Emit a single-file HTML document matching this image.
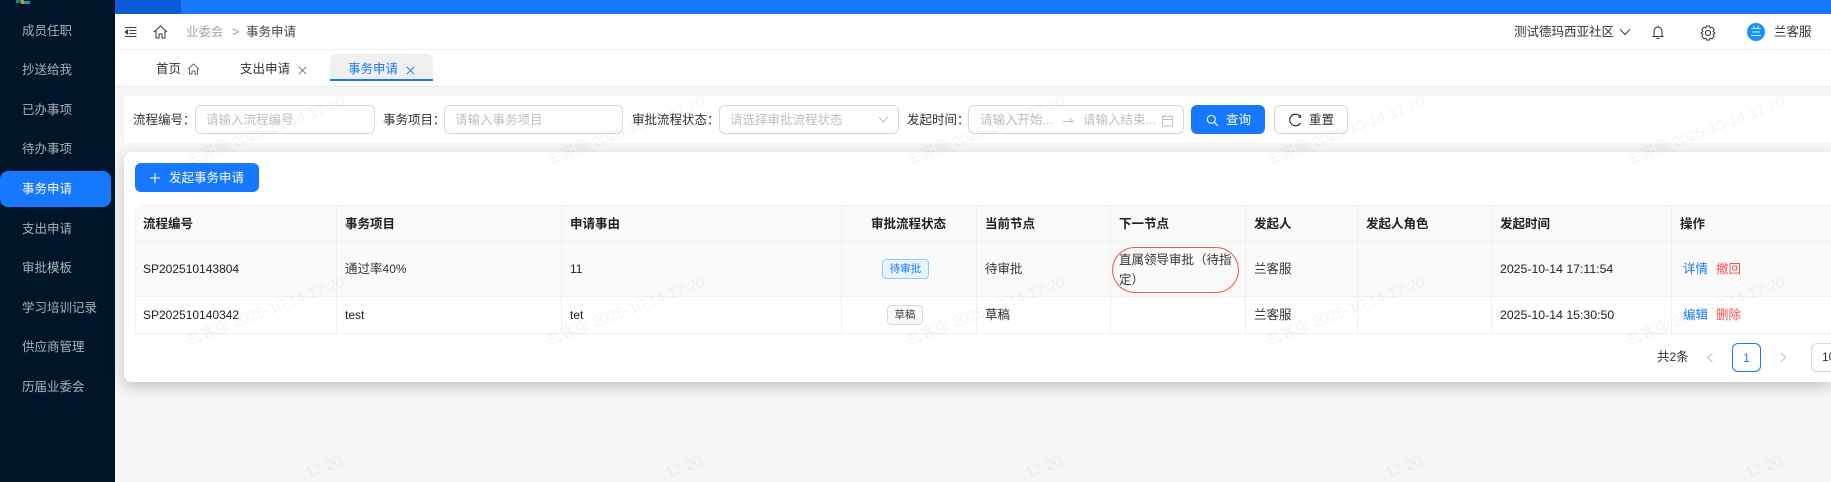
<!DOCTYPE html>
<html lang="zh-CN"><head><meta charset="utf-8"><title>事务申请</title>
<style>
*{box-sizing:border-box}
html,body{margin:0;padding:0;width:1831px;height:482px;overflow:hidden}
#r{position:absolute;left:0;top:0;width:1831px;height:482px;overflow:hidden;background:#f5f5f5;font-family:"Liberation Sans","Noto Sans CJK SC",sans-serif;font-size:12.5px;color:#222}
.a{position:absolute}
.t{position:absolute;white-space:nowrap;line-height:20px;height:20px}
.n{font-size:12px}
.d{font-size:12.3px}
.s{color:rgba(255,255,255,.65)}
.h{font-weight:700;color:#222}
.ph{color:#bfbfbf}
.ln{position:absolute;background:#f0f0f0}
.box{position:absolute;border:1px solid #d9d9d9;border-radius:6px;background:#fff;top:105px;height:29px}
svg{position:absolute;display:block;fill:none}
#wm{left:0;top:0;overflow:hidden;pointer-events:none}
#wm text{font-family:"Liberation Sans","Noto Sans CJK SC",sans-serif;font-size:15px;fill:#000;fill-opacity:.05}
</style></head><body><div id="r">

<!-- top bar -->
<div class="a" style="left:115px;top:0;width:1716px;height:14px;background:#1677ff"></div>
<div class="a" style="left:115px;top:0;width:66px;height:14px;background:#0b5bd6"></div>

<!-- sidebar -->
<div class="a" style="left:0;top:0;width:115px;height:482px;background:#001529"></div>
<div class="a" style="left:16px;top:0;width:5px;height:3px;background:#157f86"></div>
<div class="a" style="left:21px;top:0;width:3px;height:4px;background:#c98d2c"></div>
<div class="a" style="left:24px;top:1px;width:6px;height:3px;background:#1f95a3"></div>
<div class="a" style="left:0;top:171px;width:111px;height:36px;border-radius:8px;background:#1677ff"></div>
<span class="t s" style="left:22px;top:21px">成员任职</span>
<span class="t s" style="left:22px;top:60px">抄送给我</span>
<span class="t s" style="left:22px;top:100px">已办事项</span>
<span class="t s" style="left:22px;top:139px">待办事项</span>
<span class="t" style="left:22px;top:179px;color:#fff">事务申请</span>
<span class="t s" style="left:22px;top:219px">支出申请</span>
<span class="t s" style="left:22px;top:258px">审批模板</span>
<span class="t s" style="left:22px;top:298px">学习培训记录</span>
<span class="t s" style="left:22px;top:337px">供应商管理</span>
<span class="t s" style="left:22px;top:377px">历届业委会</span>

<!-- header -->
<div class="a" style="left:115px;top:14px;width:1716px;height:36px;background:#fff;border-bottom:1px solid #f0f0f0"></div>
<svg style="left:124px;top:26px" width="13" height="12" viewBox="0 0 13 12" stroke="#444" stroke-width="1"><path d="M1 1.5H12.5M5 4.5H12.5M5 7.5H12.5M1 10.5H12.5"/><path d="M3.5 4L1 6L3.5 8Z" fill="#444"/></svg>
<svg style="left:153px;top:25px" width="15" height="14" viewBox="0 0 15 14" stroke="#333" stroke-width="1"><path d="M1 7L7.5 1L14 7M3 6V13H6V9H9V13H12V6"/></svg>
<span class="t" style="left:186px;top:22px;color:#a6a6a6">业委会</span>
<span class="t" style="left:232px;top:22px;color:#999">&gt;</span>
<span class="t" style="left:246px;top:22px;color:#444">事务申请</span>
<span class="t" style="left:1514px;top:22px;color:#333">测试德玛西亚社区</span>
<svg style="left:1619px;top:28px" width="12" height="8" viewBox="0 0 12 8" stroke="#333" stroke-width="1"><path d="M1 1.2L6 6.6L11 1.2"/></svg>
<svg style="left:1651px;top:25px" width="14" height="15" viewBox="0 0 14 15" stroke="#333" stroke-width="1"><path d="M1.5 11.5H12.5M3 11.5V6.5C3 3.8 4.8 2 7 2C9.2 2 11 3.8 11 6.5V11.5M7 .5V2M5.5 13.5H8.5"/></svg>
<svg style="left:1700px;top:25px" width="16" height="16" viewBox="0 0 16 16" stroke="#333" stroke-width="1"><path d="M6.4 1H9.6L10.1 3L12 2.2L14.2 4.9L13 6.5L15 8L13 9.5L14.2 11.1L12 13.8L10.1 13L9.6 15H6.4L5.9 13L4 13.8L1.8 11.1L3 9.5L1 8L3 6.5L1.8 4.9L4 2.2L5.9 3Z"/><circle cx="8" cy="8" r="2.6"/></svg>
<div class="a" style="left:1747px;top:23px;width:18px;height:18px;border-radius:50%;background:#1890ff;color:#fff;font-size:11px;line-height:18px;text-align:center">兰</div>
<span class="t" style="left:1774px;top:22px;color:#333">兰客服</span>

<!-- tabs -->
<div class="a" style="left:115px;top:50px;width:1716px;height:37px;background:#fff;border-bottom:1px solid #ececec"></div>
<div class="a" style="left:330px;top:54px;width:103px;height:27px;background:#f0f0f0;border-radius:6px 6px 0 0;border-bottom:2px solid #1677ff"></div>
<span class="t" style="left:156px;top:59px;color:#333">首页</span>
<svg style="left:187px;top:63px" width="13" height="12" viewBox="0 0 13 12" stroke="#666" stroke-width="1"><path d="M1 6L6.5 1L12 6M2.5 5.5V11H5V8H8V11H10.5V5.5"/></svg>
<span class="t" style="left:240px;top:59px;color:#333">支出申请</span>
<svg style="left:298px;top:66px" width="9" height="9" viewBox="0 0 9 9" stroke="#777" stroke-width="1"><path d="M.8 .8L8.2 8.2M8.2 .8L.8 8.2"/></svg>
<span class="t" style="left:348px;top:59px;color:#1677ff">事务申请</span>
<svg style="left:406px;top:66px" width="9" height="9" viewBox="0 0 9 9" stroke="#1677ff" stroke-width="1"><path d="M.8 .8L8.2 8.2M8.2 .8L.8 8.2"/></svg>

<!-- filter -->
<div class="a" style="left:124px;top:96px;width:1707px;height:47px;background:#fff"></div>
<span class="t" style="left:133px;top:110px;color:#333">流程编号：</span>
<div class="box" style="left:195px;width:180px"></div>
<span class="t ph" style="left:206px;top:110px">请输入流程编号</span>
<span class="t" style="left:383px;top:110px;color:#333">事务项目：</span>
<div class="box" style="left:444px;width:179px"></div>
<span class="t ph" style="left:455px;top:110px">请输入事务项目</span>
<span class="t" style="left:632px;top:110px;color:#333">审批流程状态：</span>
<div class="box" style="left:719px;width:180px"></div>
<span class="t ph" style="left:730px;top:110px">请选择审批流程状态</span>
<svg style="left:878px;top:116px" width="11" height="7" viewBox="0 0 11 7" stroke="#bfbfbf" stroke-width="1"><path d="M1 1L5.5 6L10 1"/></svg>
<span class="t" style="left:907px;top:110px;color:#333">发起时间：</span>
<div class="box" style="left:968px;width:216px"></div>
<span class="t ph" style="left:980px;top:110px">请输入开始...</span>
<svg style="left:1062px;top:117px" width="12" height="6" viewBox="0 0 12 6" stroke="#bfbfbf" stroke-width="1"><path d="M1 4.5H11L8 1.5"/></svg>
<span class="t ph" style="left:1083px;top:110px">请输入结束...</span>
<svg style="left:1161px;top:114px" width="13" height="13" viewBox="0 0 13 13" stroke="#bfbfbf" stroke-width="1"><path d="M1.5 2.5H11.5V12H1.5ZM1.5 5.5H11.5M4 .8V3M9 .8V3"/></svg>
<div class="a" style="left:1191px;top:105px;width:74px;height:29px;border-radius:6px;background:#1677ff"></div>
<svg style="left:1206px;top:114px" width="13" height="13" viewBox="0 0 13 13" stroke="#fff" stroke-width="1.1"><circle cx="5.3" cy="5.3" r="4"/><path d="M8.2 8.2L12 12"/></svg>
<span class="t" style="left:1226px;top:110px;color:#fff">查询</span>
<div class="box" style="left:1274px;width:74px"></div>
<svg style="left:1288px;top:113px" width="14" height="14" viewBox="0 0 14 14" stroke="#222" stroke-width="1.1"><path d="M12.4 3.8A5.8 5.8 0 1 0 12.6 9.8"/><path d="M12.6 2V4.4H10.4" stroke-width=".9"/></svg>
<span class="t" style="left:1309px;top:110px;color:#333">重置</span>

<!-- card -->
<div class="a" style="left:124px;top:152px;width:1707px;height:230px;background:#fff;border-radius:8px 0 0 8px;box-shadow:0 5px 14px rgba(0,0,0,.2)"></div>
<div class="a" style="left:135px;top:163px;width:124px;height:29px;border-radius:6px;background:#1677ff"></div>
<svg style="left:149px;top:172px" width="12" height="12" viewBox="0 0 12 12" stroke="#fff" stroke-width="1.1"><path d="M6 1V11M1 6H11"/></svg>
<span class="t" style="left:169px;top:168px;color:#fff">发起事务申请</span>

<!-- table -->
<div class="a" style="left:135px;top:205px;width:1696px;height:92px;background:#fafafa;border-radius:6px 0 0 0"></div>
<div class="ln" style="left:141px;top:205px;width:1690px;height:1px"></div>
<div class="ln" style="left:135px;top:241px;width:1696px;height:1px"></div>
<div class="ln" style="left:135px;top:296px;width:1696px;height:1px"></div>
<div class="ln" style="left:135px;top:333px;width:1696px;height:1px"></div>
<div class="ln" style="left:135px;top:209px;width:1px;height:125px"></div>
<div class="ln" style="left:336px;top:205px;width:1px;height:129px"></div>
<div class="ln" style="left:561px;top:205px;width:1px;height:129px"></div>
<div class="ln" style="left:841px;top:205px;width:1px;height:129px"></div>
<div class="ln" style="left:976px;top:205px;width:1px;height:129px"></div>
<div class="ln" style="left:1110px;top:205px;width:1px;height:129px"></div>
<div class="ln" style="left:1245px;top:205px;width:1px;height:129px"></div>
<div class="ln" style="left:1357px;top:205px;width:1px;height:129px"></div>
<div class="ln" style="left:1491px;top:205px;width:1px;height:129px"></div>
<div class="ln" style="left:1671px;top:205px;width:1px;height:129px"></div>

<span class="t h" style="left:143px;top:214px">流程编号</span>
<span class="t h" style="left:345px;top:214px">事务项目</span>
<span class="t h" style="left:570px;top:214px">申请事由</span>
<span class="t h" style="left:871px;top:214px">审批流程状态</span>
<span class="t h" style="left:985px;top:214px">当前节点</span>
<span class="t h" style="left:1119px;top:214px">下一节点</span>
<span class="t h" style="left:1254px;top:214px">发起人</span>
<span class="t h" style="left:1366px;top:214px">发起人角色</span>
<span class="t h" style="left:1500px;top:214px">发起时间</span>
<span class="t h" style="left:1680px;top:214px">操作</span>

<span class="t n" style="left:143px;top:259px">SP202510143804</span>
<span class="t" style="left:345px;top:259px;color:#333">通过率<span class="n">40%</span></span>
<span class="t n" style="left:570px;top:259px">11</span>
<div class="a" style="left:882px;top:259px;width:47px;height:20px;border:1px solid #91caff;border-radius:4px;background:#e6f4ff;color:#1677ff;font-size:10.5px;line-height:18px;text-align:center">待审批</div>
<span class="t" style="left:985px;top:259px;color:#333">待审批</span>
<span class="t" style="left:1119px;top:250px;color:#333">直属领导审批（待指</span>
<span class="t" style="left:1119px;top:270px;color:#333">定）</span>
<div class="a" style="left:1112px;top:247px;width:127px;height:46px;border:1px solid #f4565a;border-radius:23px"></div>
<span class="t" style="left:1254px;top:259px;color:#333">兰客服</span>
<span class="t d" style="left:1500px;top:259px">2025-10-14 17:11:54</span>
<span class="t" style="left:1683px;top:259px;color:#1677ff">详情</span>
<span class="t" style="left:1716px;top:259px;color:#ff4d4f">撤回</span>

<span class="t n" style="left:143px;top:305px">SP202510140342</span>
<span class="t n" style="left:345px;top:305px">test</span>
<span class="t n" style="left:570px;top:305px">tet</span>
<div class="a" style="left:887px;top:305px;width:36px;height:20px;border:1px solid #d9d9d9;border-radius:4px;background:#fafafa;color:#444;font-size:10.5px;line-height:18px;text-align:center">草稿</div>
<span class="t" style="left:985px;top:305px;color:#333">草稿</span>
<span class="t" style="left:1254px;top:305px;color:#333">兰客服</span>
<span class="t d" style="left:1500px;top:305px">2025-10-14 15:30:50</span>
<span class="t" style="left:1683px;top:305px;color:#1677ff">编辑</span>
<span class="t" style="left:1716px;top:305px;color:#ff4d4f">删除</span>

<!-- pagination -->
<span class="t" style="left:1657px;top:347px;color:#333">共<span class="n">2</span>条</span>
<svg style="left:1706px;top:352px" width="8" height="11" viewBox="0 0 8 11" stroke="#bfbfbf" stroke-width="1.1"><path d="M6.5 1L1.5 5.5L6.5 10"/></svg>
<div class="a" style="left:1732px;top:343px;width:29px;height:29px;border:1px solid #1677ff;border-radius:6px;color:#1677ff;font-size:12px;line-height:28px;text-align:center;background:#fff">1</div>
<svg style="left:1779px;top:352px" width="8" height="11" viewBox="0 0 8 11" stroke="#bfbfbf" stroke-width="1.1"><path d="M1.5 1L6.5 5.5L1.5 10"/></svg>
<div class="a" style="left:1811px;top:343px;width:20px;height:29px;border:1px solid #d9d9d9;border-right:0;border-radius:6px 0 0 6px;background:#fff"></div>
<span class="t n" style="left:1822px;top:347px;color:#333;width:9px;overflow:hidden">10</span>

<!-- watermarks -->
<svg id="wm" width="1831" height="482" viewBox="0 0 1831 482">
<text x="187" y="165" transform="rotate(-20.5 187 160)">兰客服 2025-10-14 17:20</text>
<text x="547" y="165" transform="rotate(-20.5 547 160)">兰客服 2025-10-14 17:20</text>
<text x="907" y="165" transform="rotate(-20.5 907 160)">兰客服 2025-10-14 17:20</text>
<text x="1267" y="165" transform="rotate(-20.5 1267 160)">兰客服 2025-10-14 17:20</text>
<text x="1627" y="165" transform="rotate(-20.5 1627 160)">兰客服 2025-10-14 17:20</text>
<text x="187" y="345" transform="rotate(-20.5 187 340)">兰客服 2025-10-14 17:20</text>
<text x="547" y="345" transform="rotate(-20.5 547 340)">兰客服 2025-10-14 17:20</text>
<text x="907" y="345" transform="rotate(-20.5 907 340)">兰客服 2025-10-14 17:20</text>
<text x="1267" y="345" transform="rotate(-20.5 1267 340)">兰客服 2025-10-14 17:20</text>
<text x="1627" y="345" transform="rotate(-20.5 1627 340)">兰客服 2025-10-14 17:20</text>
<text x="308" y="478" transform="rotate(-20.5 308 478)">17:20</text>
<text x="668" y="478" transform="rotate(-20.5 668 478)">17:20</text>
<text x="1028" y="478" transform="rotate(-20.5 1028 478)">17:20</text>
<text x="1388" y="478" transform="rotate(-20.5 1388 478)">17:20</text>
<text x="1748" y="478" transform="rotate(-20.5 1748 478)">17:20</text>
</svg>
</div></body></html>
